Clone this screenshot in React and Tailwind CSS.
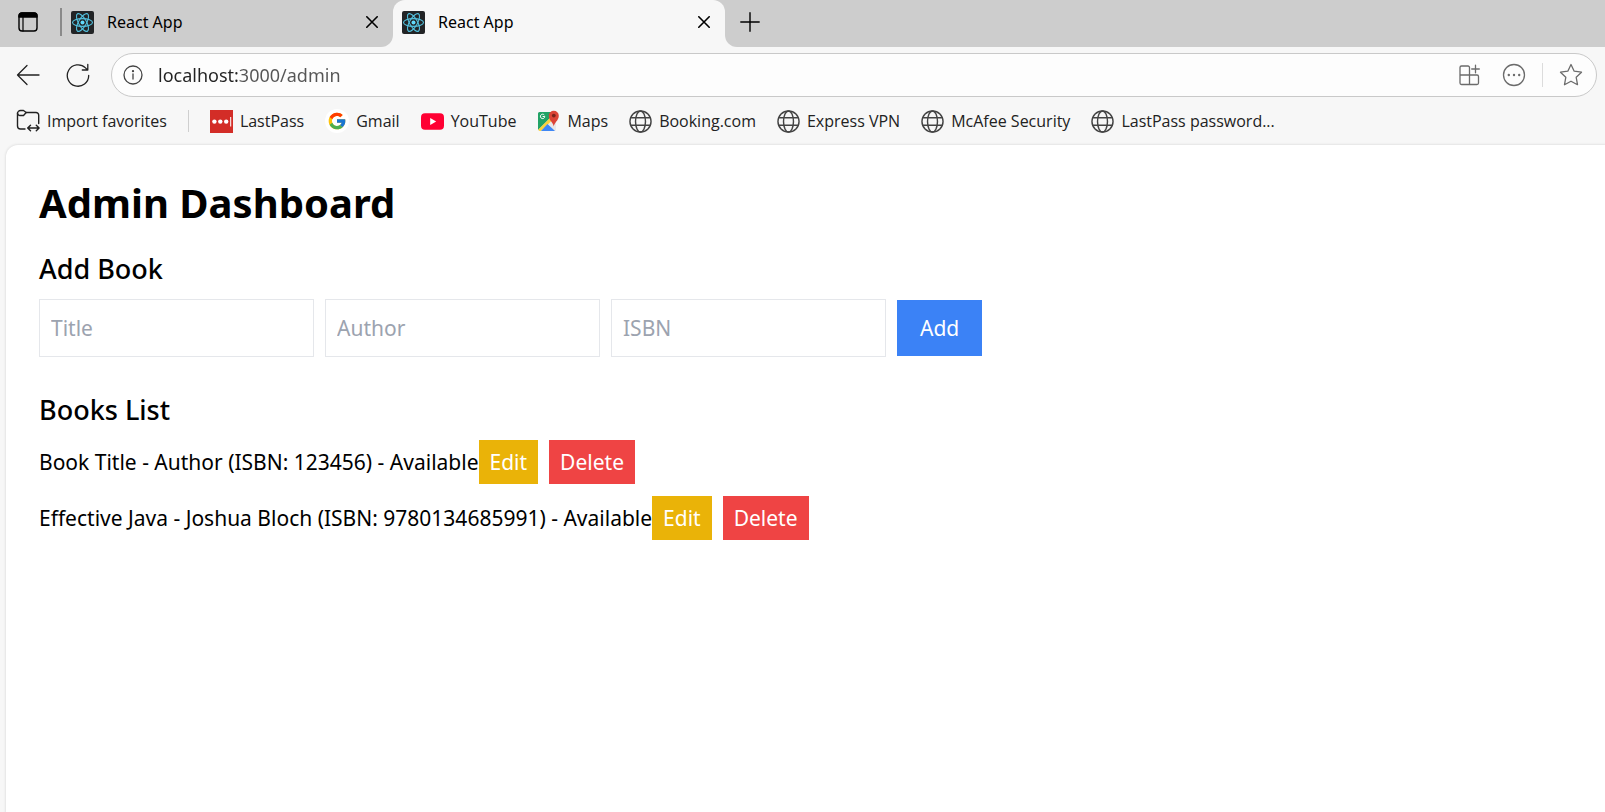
import React from "react";
import { FcGoogle } from "react-icons/fc";

const stroke = {
  fill: "none",
  stroke: "currentColor",
  strokeLinecap: "round",
  strokeLinejoin: "round",
};

function TabActionsIcon() {
  return (
    <svg width="20" height="20" viewBox="0 0 20 20" {...stroke} strokeWidth="1.4" aria-hidden="true">
      <rect x="1" y="1" width="18" height="18" rx="3" />
      <path d="M1 5V4A3 3 0 0 1 4 1h12A3 3 0 0 1 19 4v1z" fill="currentColor" />
      <path d="M5 5V19" strokeWidth="1.2" />
    </svg>
  );
}

function ReactIcon() {
  return (
    <svg width="23" height="23" viewBox="0 0 23 23" aria-hidden="true">
      <rect width="23" height="23" rx="2" fill="#222426" />
      <g fill="none" stroke="#53c1de" strokeWidth="1.1">
        <ellipse cx="11.5" cy="11.5" rx="10" ry="3.9" />
        <ellipse cx="11.5" cy="11.5" rx="10" ry="3.9" transform="rotate(60 11.5 11.5)" />
        <ellipse cx="11.5" cy="11.5" rx="10" ry="3.9" transform="rotate(120 11.5 11.5)" />
      </g>
      <circle cx="11.5" cy="11.5" r="2" fill="#61dafb" />
    </svg>
  );
}

function CloseIcon() {
  return (
    <svg width="12" height="12" viewBox="0 0 12 12" {...stroke} strokeWidth="1.6" aria-hidden="true">
      <path d="M.8 .8l10.4 10.4M11.2 .8L.8 11.2" />
    </svg>
  );
}

function PlusIcon() {
  return (
    <svg width="20" height="20" viewBox="0 0 20 20" {...stroke} strokeWidth="1.4" aria-hidden="true">
      <path d="M10 .8v18.4M.8 10h18.4" />
    </svg>
  );
}

function BackIcon() {
  return (
    <svg width="24" height="22" viewBox="0 0 24 22" {...stroke} strokeWidth="1.3" aria-hidden="true">
      <path d="M11 1.5L1.5 11l9.500 9.500M1.500 11h21.500" />
    </svg>
  );
}

function ReloadIcon() {
  return (
    <svg width="24" height="24" viewBox="0 0 24 24" {...stroke} strokeWidth="1.3" aria-hidden="true">
      <path d="M22.700 12.500A10.700 10.700 0 1 1 19.500 4.900L21.500 7M21.800 1.500v5.500h-5.500" />
    </svg>
  );
}

function InfoIcon() {
  return (
    <svg width="20" height="20" viewBox="0 0 20 20" {...stroke} strokeWidth="1.3" aria-hidden="true">
      <circle cx="10" cy="10" r="9" />
      <path d="M10 9v5" />
      <circle cx="10" cy="6.2" r=".5" fill="currentColor" />
    </svg>
  );
}

function AppsIcon() {
  return (
    <svg width="22" height="22" viewBox="0 0 22 22" {...stroke} strokeWidth="1.3" aria-hidden="true">
      <path d="M11.500 11V3.500a1.500 1.500 0 0 0-1.500-1.500h-6.500A1.500 1.500 0 0 0 2 3.500v15.500A1.500 1.500 0 0 0 3.500 20.500h15.500a1.500 1.500 0 0 0 1.500-1.500v-6.500A1.500 1.500 0 0 0 19 11H2M11.500 11v9.500M17.500 1.200v7.600M13.700 5h7.600" />
    </svg>
  );
}

function MoreIcon() {
  return (
    <svg width="24" height="24" viewBox="0 0 24 24" {...stroke} strokeWidth="1.3" aria-hidden="true">
      <circle cx="12" cy="12" r="10.5" />
      <g fill="currentColor" stroke="none">
        <circle cx="6.8" cy="12" r="1.2" />
        <circle cx="12" cy="12" r="1.2" />
        <circle cx="17.2" cy="12" r="1.2" />
      </g>
    </svg>
  );
}

function StarIcon() {
  return (
    <svg width="24" height="24" viewBox="0 0 24 24" {...stroke} strokeWidth="1.3" aria-hidden="true">
      <path d="M12 1.500l3.200 6.700 7.300 1-5.300 5.100 1.300 7.400L12 18.200l-6.500 3.500 1.300-7.400L1.500 9.200l7.300-1z" />
    </svg>
  );
}

function ImportIcon() {
  return (
    <svg width="24" height="24" viewBox="0 0 24 24" {...stroke} strokeWidth="1.4" aria-hidden="true">
      <path d="M9 20H4.500A3 3 0 0 1 1.500 17V4.500A3 3 0 0 1 4.500 1.500H7.500L10.200 3.500H20A2.700 2.700 0 0 1 22.700 6.200v8.300" />
      <path d="M1.500 4A2.500 2.500 0 0 0 4 6.500H7.500L10.200 3.500" />
      <path d="M12 19h11M14.500 16.200L11.700 19l2.800 2.800M20.300 16.200L23.100 19l-2.800 2.800" />
    </svg>
  );
}

function LastPassIcon() {
  return (
    <svg width="23" height="23" viewBox="0 0 23 23" aria-hidden="true">
      <rect width="23" height="23" fill="#d32d27" />
      <g fill="#fff">
        <circle cx="4.4" cy="11.6" r="2.2" />
        <circle cx="10.3" cy="11.6" r="2.2" />
        <circle cx="16.2" cy="11.6" r="2.2" />
        <rect x="20.2" y="7" width="1" height="9.5" />
      </g>
    </svg>
  );
}

function GmailIcon() {
  return (
    <span className="flex size-6 items-center justify-center rounded-full bg-white">
      <FcGoogle size={20} aria-hidden="true" />
    </span>
  );
}

function YouTubeIcon() {
  return (
    <svg width="23" height="23" viewBox="0 0 23 23" aria-hidden="true">
      <rect y="3.3" width="23" height="16.400" rx="4" fill="#ff0033" />
      <path d="M9.2 8l6 3.500-6 3.500z" fill="#fff" />
    </svg>
  );
}

function MapsIcon() {
  return (
    <svg width="23" height="23" viewBox="0 0 23 23" aria-hidden="true">
      <rect x="1" y="2" width="18" height="19" rx="1.5" fill="#e8e8e8" />
      <path d="M1 20V3.500A1.500 1.500 0 0 1 2.500 2H14L14 7z" fill="#22a366" />
      <path d="M1.200 19.800L14.500 6.500l2 2.500L4 21H2.500z" fill="#fbd33c" />
      <path d="M4 21l6.500-7L18 21z" fill="#3f87f5" />
      <path d="M16.800 16.500c-.6-4-5-6-5-10.700a5 5 0 0 1 10 0c0 4.700-4.400 6.700-5 10.700z" fill="#dc4437" />
      <circle cx="16.800" cy="5.600" r="1.900" fill="#7c231c" />
      <path d="M7.800 6.500H5.600M7.300 5A2.200 2.200 0 1 0 7.800 6.600" fill="none" stroke="#fff" strokeWidth="1" />
    </svg>
  );
}

function GlobeIcon() {
  return (
    <svg width="23" height="23" viewBox="0 0 24 24" {...stroke} stroke="#444" strokeWidth="1.5" aria-hidden="true">
      <circle cx="12" cy="12" r="11" />
      <ellipse cx="12" cy="12" rx="5.200" ry="11" />
      <path d="M2 8h20M2 16h20" />
    </svg>
  );
}

const favorites = [
  { name: "LastPass", icon: LastPassIcon },
  { name: "Gmail", icon: GmailIcon },
  { name: "YouTube", icon: YouTubeIcon },
  { name: "Maps", icon: MapsIcon },
  { name: "Booking.com", icon: GlobeIcon },
  { name: "Express VPN", icon: GlobeIcon },
  { name: "McAfee Security", icon: GlobeIcon },
  { name: "LastPass password...", icon: GlobeIcon },
];

const books = [
  { title: "Book Title", author: "Author", isbn: "123456", status: "Available" },
  { title: "Effective Java", author: "Joshua Bloch", isbn: "9780134685991", status: "Available" },
];

function Tab() {
  return (
    <div className="flex h-full w-full items-center justify-between pl-[9px] pr-[15px]">
      <button type="button" className="flex items-center gap-[13px]">
        <ReactIcon />
        <span>React App</span>
      </button>
      <button type="button" aria-label="Close tab">
        <CloseIcon />
      </button>
    </div>
  );
}

function TabStrip() {
  return (
    <div className="flex h-[47px] text-base text-black">
      <div className="flex w-[393px] items-center rounded-br-xl bg-[#cdcdcd] pb-[3px] pl-[18px]">
        <button type="button" aria-label="Tab actions">
          <TabActionsIcon />
        </button>
        <div className="ml-[22px] h-7 w-0.5 shrink-0 bg-[#8a8a8a]" />
        <Tab />
      </div>
      <div className="w-[332px] bg-[#cdcdcd]">
        <div className="h-full rounded-t-xl bg-[#f7f7f7] pb-[3px]">
          <Tab />
        </div>
      </div>
      <div className="flex flex-1 items-center rounded-bl-xl bg-[#cdcdcd] pb-1 pl-[15px]">
        <button type="button" aria-label="New tab">
          <PlusIcon />
        </button>
      </div>
    </div>
  );
}

function AddressRow() {
  return (
    <div className="flex items-center gap-[21px] pl-4 pr-2 pt-1.5">
      <div className="flex items-center gap-[26px] text-[#222]">
        <button type="button" aria-label="Back">
          <BackIcon />
        </button>
        <button type="button" aria-label="Refresh">
          <ReloadIcon />
        </button>
      </div>
      <div className="flex h-11 flex-1 items-center rounded-full border border-[#c9c9c9] bg-[#fdfdfd] pl-[11px] pr-[13px] text-[#6b6b6b]">
        <button type="button" aria-label="View site information" className="text-[#444]">
          <InfoIcon />
        </button>
        <input
          type="text"
          aria-label="Address"
          defaultValue="localhost:3000/admin"
          className="ml-[15px] min-w-0 flex-1 bg-[linear-gradient(90deg,#222_80px,#555_80px)] bg-clip-text text-lg text-transparent caret-black outline-none"
        />
        <div className="flex items-center">
          <button type="button" aria-label="Apps">
            <AppsIcon />
          </button>
          <button type="button" aria-label="More" className="ml-[22px]">
            <MoreIcon />
          </button>
          <div className="mx-4 h-6 w-px bg-[#dcdcdc]" />
          <button type="button" aria-label="Add to favorites">
            <StarIcon />
          </button>
        </div>
      </div>
    </div>
  );
}

function FavoritesBar() {
  return (
    <nav
      aria-label="Favorites"
      className="flex h-12 items-center gap-[21px] pl-4 font-['Open_Sans','Noto_Sans',sans-serif] text-base text-[#222]"
    >
      <button type="button" className="flex items-center gap-[7px]">
        <ImportIcon />
        Import favorites
      </button>
      <div className="h-[22px] w-px bg-[#cfcfcf]" />
      {favorites.map(({ name, icon: Icon }) => (
        <a key={name} href="#" className="flex items-center gap-[7px] whitespace-nowrap">
          <Icon />
          {name}
        </a>
      ))}
    </nav>
  );
}

function AddBookForm() {
  return (
    <section className="mt-5">
      <h2 className="text-[27px] leading-9 font-medium">Add Book</h2>
      <form className="mt-3 flex items-center gap-[11px]" onSubmit={(event) => event.preventDefault()}>
        {["Title", "Author", "ISBN"].map((field) => (
          <input
            key={field}
            type="text"
            aria-label={field}
            placeholder={field}
            className="h-[58px] w-[275px] border border-gray-200 px-[11px] placeholder:text-[#9ca3af] placeholder:opacity-100"
          />
        ))}
        <button type="submit" className="h-14 bg-[#3b82f6] px-[23px] text-white">
          Add
        </button>
      </form>
    </section>
  );
}

function BooksList() {
  return (
    <section className="mt-[35px]">
      <h2 className="text-[27px] leading-9 font-medium">Books List</h2>
      <ul className="mt-3 flex flex-col gap-3">
        {books.map(({ title, author, isbn, status }) => (
          <li key={isbn} className="flex items-center">
            <span>{`${title} - ${author} (ISBN: ${isbn}) - ${status}`}</span>
            <button type="button" className="h-11 bg-[#eab308] px-[11px] text-white">
              Edit
            </button>
            <button type="button" className="ml-[11px] h-11 bg-[#ef4444] px-[11px] text-white">
              Delete
            </button>
          </li>
        ))}
      </ul>
    </section>
  );
}

export default function App() {
  return (
    <div className="flex min-h-screen flex-col bg-[#f7f7f7] font-['Noto_Sans','Open_Sans',sans-serif]">
      <header>
        <TabStrip />
        <AddressRow />
        <FavoritesBar />
      </header>
      <main className="ml-1.5 flex-1 rounded-tl-xl bg-white px-[33px] pt-[30px] text-[21px] leading-8 text-black shadow-[0_0_2px_1px_#e4e4e4]">
        <h1 className="text-[40px] leading-[56px] font-bold">Admin Dashboard</h1>
        <AddBookForm />
        <BooksList />
      </main>
    </div>
  );
}
